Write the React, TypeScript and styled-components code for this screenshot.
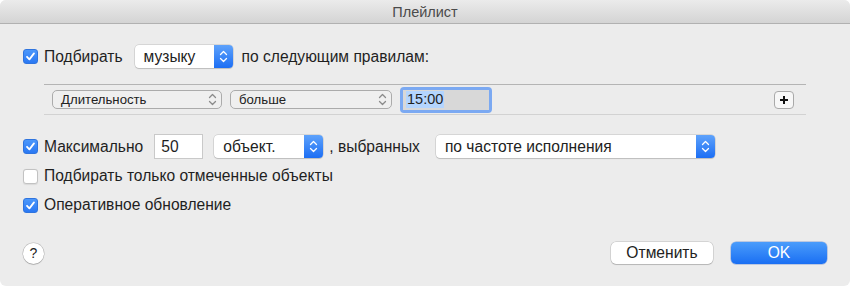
import { createGlobalStyle, css } from "styled-components";
import styled from "styled-components";

const GlobalStyle = createGlobalStyle`
  html, body {
    margin: 0;
    padding: 0;
    background: #ffffff;
  }
  body {
    font-family: "Liberation Sans", Arial, sans-serif;
    color: #1f1f1f;
  }
`;

const Window = styled.div`
  width: 850px;
  height: 286px;
  box-sizing: border-box;
  background: #ececec;
  border-radius: 6px;
  overflow: hidden;
  display: flex;
  flex-direction: column;
`;

const TitleBar = styled.div`
  height: 23px;
  flex: none;
  background: linear-gradient(#ebebeb, #d4d4d4);
  border-bottom: 1px solid #b1b1b1;
  display: flex;
  align-items: center;
  justify-content: center;
  font-size: 14.5px;
  color: #4b4b4b;
`;

const Content = styled.div`
  flex: 1;
  padding: 21px 23px 0 23px;
  display: flex;
  flex-direction: column;
`;

const Row = styled.div<{ $h?: number; $mt?: number }>`
  display: flex;
  align-items: center;
  height: ${(p) => p.$h ?? 20}px;
  margin-top: ${(p) => p.$mt ?? 0}px;
  font-size: 15.6px;
`;

const Label = styled.span<{ $ml?: number }>`
  margin-left: ${(p) => p.$ml ?? 0}px;
  white-space: nowrap;
`;

const Box = styled.span<{ $on?: boolean }>`
  width: 15px;
  height: 15px;
  box-sizing: border-box;
  border-radius: 3px;
  flex: none;
  margin-right: 6px;
  display: flex;
  align-items: center;
  justify-content: center;
  ${(p) =>
    p.$on
      ? css`
          background: linear-gradient(#4c98fb, #2a78f3);
          border: 1px solid #2f74de;
        `
      : css`
          background: #ffffff;
          border: 1px solid #c2c2c2;
          box-shadow: 0 0.5px 1px rgba(0, 0, 0, 0.08);
        `}
`;

const Checkbox = ({ on }: { on?: boolean }) => (
  <Box $on={on}>
    {on && (
      <svg width="11" height="11" viewBox="0 0 11 11">
        <path
          d="M2 5.8 L4.4 8.4 L9 2.4"
          fill="none"
          stroke="#fff"
          strokeWidth="1.8"
          strokeLinecap="round"
          strokeLinejoin="round"
        />
      </svg>
    )}
  </Box>
);

const Popup = styled.div<{ $w: number; $ml?: number }>`
  width: ${(p) => p.$w}px;
  height: 23px;
  margin-left: ${(p) => p.$ml ?? 0}px;
  box-sizing: border-box;
  display: flex;
  background: #ffffff;
  border-radius: 4px;
  box-shadow: 0 0 0 0.5px rgba(0, 0, 0, 0.18), 0 1px 1px rgba(0, 0, 0, 0.12);
  overflow: hidden;
  flex: none;
`;

const PopupText = styled.span`
  flex: 1;
  padding-left: 9px;
  display: flex;
  align-items: center;
  font-size: 15.6px;
  color: #222;
`;

const Stepper = styled.span`
  width: 19px;
  flex: none;
  background: linear-gradient(#5ea2fb, #1c6ef4);
  display: flex;
  align-items: center;
  justify-content: center;
`;

const Chevrons = ({ color }: { color: string }) => (
  <svg width="9" height="15" viewBox="0 0 9 15">
    <path
      d="M1.5 5.5 L4.5 2.5 L7.5 5.5 M1.5 9.5 L4.5 12.5 L7.5 9.5"
      fill="none"
      stroke={color}
      strokeWidth="1.3"
      strokeLinecap="round"
      strokeLinejoin="round"
    />
  </svg>
);

const BluePopup = ({ w, ml, text }: { w: number; ml?: number; text: string }) => (
  <Popup $w={w} $ml={ml}>
    <PopupText>{text}</PopupText>
    <Stepper>
      <Chevrons color="#ffffff" />
    </Stepper>
  </Popup>
);

const Rules = styled.div`
  margin: 16px 0 0 21px;
  height: 29px;
  border-top: 1px solid #b4b4b4;
  border-bottom: 1px solid #d2d2d2;
  display: flex;
  align-items: center;
  padding-left: 8px;
  padding-right: 12px;
  box-sizing: content-box;
  width: 742px;
`;

const SmallPopup = styled.div<{ $w: number; $ml?: number }>`
  width: ${(p) => p.$w}px;
  height: 19px;
  margin-left: ${(p) => p.$ml ?? 0}px;
  box-sizing: border-box;
  border: 1px solid #ababab;
  border-radius: 5px;
  background: #efefef;
  display: flex;
  align-items: center;
  justify-content: space-between;
  padding: 0 4px 0 8px;
  font-size: 13.2px;
  color: #222;
  flex: none;
`;

const FocusField = styled.div`
  margin-left: 8px;
  width: 92px;
  height: 26px;
  box-sizing: border-box;
  border-radius: 4px;
  background: #7ba9f2;
  padding: 3px;
  display: flex;
  flex: none;
`;

const FieldInner = styled.div`
  flex: 1;
  background: #d8d8d8;
  display: flex;
  align-items: center;
  padding-left: 3px;
  font-size: 14.5px;
`;

const Selected = styled.span`
  background: #b4d5fe;
  padding: 0 1px;
  line-height: 17px;
`;

const PlusButton = styled.div`
  margin-left: auto;
  width: 20px;
  height: 18px;
  box-sizing: border-box;
  border: 1px solid #a9a9a9;
  border-radius: 4px;
  background: #f7f7f7;
  display: flex;
  align-items: center;
  justify-content: center;
`;

const NumberField = styled.div`
  margin-left: 11px;
  width: 49px;
  height: 25px;
  box-sizing: border-box;
  background: #ffffff;
  border: 1px solid #c9c9c9;
  display: flex;
  align-items: center;
  padding-left: 6px;
  font-size: 15.6px;
  flex: none;
`;

const Footer = styled.div`
  margin-top: 27px;
  display: flex;
  align-items: center;
  gap: 18px;
`;

const HelpButton = styled.div`
  width: 21px;
  height: 21px;
  box-sizing: border-box;
  border-radius: 50%;
  background: #ffffff;
  box-shadow: 0 0 0 0.5px rgba(0, 0, 0, 0.22), 0 1px 1px rgba(0, 0, 0, 0.15);
  display: flex;
  align-items: center;
  justify-content: center;
  font-size: 14px;
  color: #222;
  margin-right: auto;
`;

const Button = styled.div<{ $primary?: boolean; $w: number }>`
  width: ${(p) => p.$w}px;
  height: 22px;
  border-radius: 5px;
  display: flex;
  align-items: center;
  justify-content: center;
  font-size: 15.6px;
  ${(p) =>
    p.$primary
      ? css`
          background: linear-gradient(#4a9cfb, #1a6ff3);
          color: #ffffff;
          box-shadow: 0 0 0 0.5px rgba(0, 60, 180, 0.4);
        `
      : css`
          background: #ffffff;
          color: #222;
          box-shadow: 0 0 0 0.5px rgba(0, 0, 0, 0.2), 0 1px 1px rgba(0, 0, 0, 0.14);
        `}
`;

export default function App() {
  return (
    <>
      <GlobalStyle />
      <Window>
        <TitleBar>Плейлист</TitleBar>
        <Content>
          <Row $h={23}>
            <Checkbox on />
            <Label>Подбирать</Label>
            <BluePopup w={98} ml={12} text="музыку" />
            <Label $ml={9}>по следующим правилам:</Label>
          </Row>

          <Rules>
            <SmallPopup $w={170}>
              <span>Длительность</span>
              <Chevrons color="#8a8a8a" />
            </SmallPopup>
            <SmallPopup $w={162} $ml={8}>
              <span>больше</span>
              <Chevrons color="#8a8a8a" />
            </SmallPopup>
            <FocusField>
              <FieldInner>
                <Selected>15:00</Selected>
              </FieldInner>
            </FocusField>
            <PlusButton>
              <svg width="10" height="10" viewBox="0 0 10 10">
                <path d="M5 1 V9 M1 5 H9" stroke="#111" strokeWidth="2" />
              </svg>
            </PlusButton>
          </Rules>

          <Row $h={25} $mt={19}>
            <Checkbox on />
            <Label>Максимально</Label>
            <NumberField>50</NumberField>
            <BluePopup w={109} ml={11} text="объект." />
            <Label $ml={6}>, выбранных</Label>
            <BluePopup w={279} ml={16} text="по частоте исполнения" />
          </Row>
          <Row $mt={7}>
            <Checkbox />
            <Label>Подбирать только отмеченные объекты</Label>
          </Row>
          <Row $mt={9}>
            <Checkbox on />
            <Label>Оперативное обновление</Label>
          </Row>

          <Footer>
            <HelpButton>?</HelpButton>
            <Button $w={102}>Отменить</Button>
            <Button $w={96} $primary>
              OK
            </Button>
          </Footer>
        </Content>
      </Window>
    </>
  );
}
